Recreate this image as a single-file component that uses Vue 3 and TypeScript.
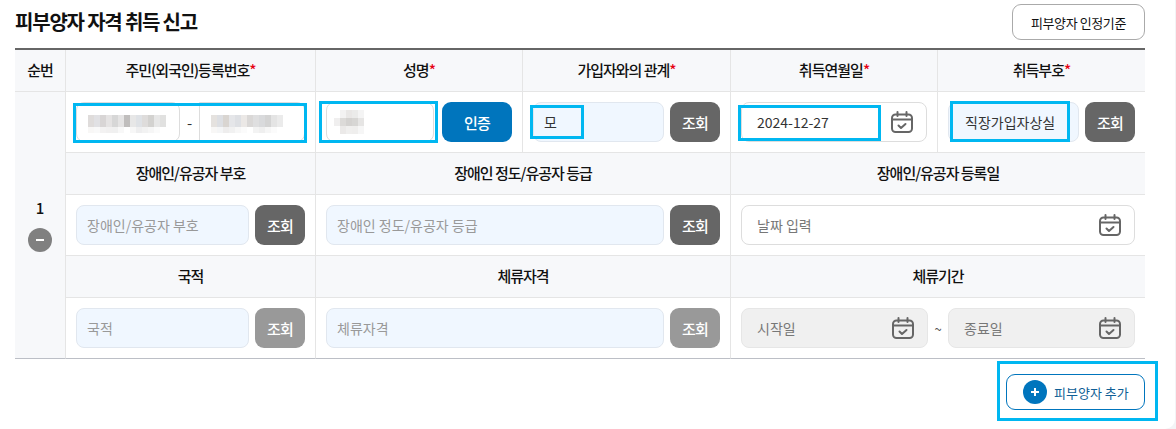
<script setup lang="ts">
interface Box { x: number; y: number; w: number; h: number }

const highlights: Box[] = [
  { x: 73, y: 103, w: 234, h: 40 },
  { x: 319, y: 101, w: 119, h: 42 },
  { x: 530, y: 105, w: 54, h: 34 },
  { x: 738, y: 105, w: 143, h: 36 },
  { x: 950, y: 101, w: 120, h: 41 },
  { x: 997, y: 361, w: 161, h: 60 }
]

const idFront: string[][] = [
  ['#dfdcdb', '#e1e1e4', '#d8d5d5', '#e5e3e3', '#d7d7d7', '#e5e4e4', '#c0bebd', '#e7e7e7', '#dfe2e6', '#dedcdb', '#d3d2d0', '#e7e7e7', '#e1e1e0'],
  ['#f8f7f6', '#f9f9f9', '#f3f2f2', '#f1f0f0', '#f0f0f0', '#f8f8f8', '#ffffff', '#f7f7f7', '#eeeeef', '#f2f2f2', '#f6f6f6', '#fbfbfb', '#ffffff']
]
const idBack: string[][] = [
  ['#e5e2df', '#dddfe3', '#d9d5d1', '#e5e6e9', '#dee0e4', '#ebe8e6', '#dad8d7', '#dfdfe0', '#d9dadc', '#d4d4d4', '#e4e4e4', '#ebebeb', '#ffffff'],
  ['#f8f7f6', '#f4f5f6', '#eeeded', '#f1f1f1', '#f7f7f7', '#fbfbfb', '#ffffff', '#f3f3f3', '#efefef', '#f6f6f6', '#fbfbfb', '#ffffff', '#ffffff']
]
const nameBlur: string[][] = [
  ['#ffffff', '#f3f2f2', '#e9e7e6', '#ebebea', '#f4f4f4', '#ffffff'],
  ['#f0efef', '#dcdad8', '#d4d2d0', '#d7d6d4', '#e6e5e4', '#ffffff'],
  ['#ffffff', '#ebe9e8', '#f0efee', '#efeeed', '#f6f6f6', '#ffffff']
]
const cell = 6
</script>

<template>
  <div class="panel">
    <header class="head">
      <h2 class="title">피부양자 자격 취득 신고</h2>
      <button class="outline-btn" type="button">피부양자 인정기준</button>
    </header>

    <table class="grid">
      <colgroup>
        <col class="c1" /><col class="c2" /><col class="c3" /><col class="c4" /><col class="c5" /><col class="c6" />
      </colgroup>
      <tbody>
        <tr class="th-row">
          <th>순번</th>
          <th>주민(외국인)등록번호<em>*</em></th>
          <th>성명<em>*</em></th>
          <th>가입자와의 관계<em>*</em></th>
          <th>취득연월일<em>*</em></th>
          <th class="last">취득부호<em>*</em></th>
        </tr>
        <tr class="td-row">
          <td class="seq" rowspan="5">
            <div class="seq-no">1</div>
            <button class="minus" type="button" aria-label="삭제"><span></span></button>
          </td>
          <td>
            <div class="line id-line">
              <div class="field plain mosaic-field">
                <svg :width="13 * cell" :height="idFront.length * cell + cell" class="mosaic">
                  <template v-for="(row, r) in idFront" :key="r">
                    <rect v-for="(c, i) in row" :key="i" :x="i * cell" :y="r * 12" :width="cell" :height="r === 0 ? 12 : 6" :fill="c" />
                  </template>
                </svg>
              </div>
              <span class="dash">-</span>
              <div class="field plain mosaic-field back">
                <svg :width="13 * cell" :height="idBack.length * cell + cell" class="mosaic">
                  <template v-for="(row, r) in idBack" :key="r">
                    <rect v-for="(c, i) in row" :key="i" :x="i * cell" :y="r * 12" :width="cell" :height="r === 0 ? 12 : 6" :fill="c" />
                  </template>
                </svg>
              </div>
            </div>
          </td>
          <td>
            <div class="line">
              <div class="field plain mosaic-field name">
                <svg :width="6 * cell" :height="3 * 8" class="mosaic">
                  <template v-for="(row, r) in nameBlur" :key="r">
                    <rect v-for="(c, i) in row" :key="i" :x="i * cell" :y="r * 8" :width="cell" :height="8" :fill="c" />
                  </template>
                </svg>
              </div>
              <button class="btn blue" type="button">인증</button>
            </div>
          </td>
          <td>
            <div class="line">
              <input class="field code" value="모" readonly />
              <button class="btn dark" type="button">조회</button>
            </div>
          </td>
          <td>
            <div class="date-field white">
              <input class="date-input strong" value="2024-12-27" readonly />
              <svg class="cal" width="22" height="22" viewBox="0 0 22 22" fill="none" stroke="#666" stroke-width="2" stroke-linecap="round" stroke-linejoin="round">
                <rect x="1" y="3.5" width="20" height="17.5" rx="3.5" /><path d="M1.5 8.5h19M6.5 1v4M15.5 1v4" /><path d="M7.5 14.5l2.5 2.5 4.5-4" />
              </svg>
            </div>
          </td>
          <td class="last">
            <div class="line tight">
              <input class="field code wide-pad" value="직장가입자상실" readonly />
              <button class="btn dark" type="button">조회</button>
            </div>
          </td>
        </tr>
        <tr class="th-row">
          <th>장애인/유공자 부호</th>
          <th colspan="2">장애인 정도/유공자 등급</th>
          <th colspan="2" class="last">장애인/유공자 등록일</th>
        </tr>
        <tr class="td-row">
          <td>
            <div class="line">
              <input class="field code" placeholder="장애인/유공자 부호" readonly />
              <button class="btn dark" type="button">조회</button>
            </div>
          </td>
          <td colspan="2">
            <div class="line">
              <input class="field code" placeholder="장애인 정도/유공자 등급" readonly />
              <button class="btn dark" type="button">조회</button>
            </div>
          </td>
          <td colspan="2" class="last">
            <div class="date-field white">
              <input class="date-input" placeholder="날짜 입력" readonly />
              <svg class="cal" width="22" height="22" viewBox="0 0 22 22" fill="none" stroke="#666" stroke-width="2" stroke-linecap="round" stroke-linejoin="round">
                <rect x="1" y="3.5" width="20" height="17.5" rx="3.5" /><path d="M1.5 8.5h19M6.5 1v4M15.5 1v4" /><path d="M7.5 14.5l2.5 2.5 4.5-4" />
              </svg>
            </div>
          </td>
        </tr>
        <tr class="th-row">
          <th>국적</th>
          <th colspan="2">체류자격</th>
          <th colspan="2" class="last">체류기간</th>
        </tr>
        <tr class="td-row end">
          <td>
            <div class="line">
              <input class="field code" placeholder="국적" readonly />
              <button class="btn muted" type="button">조회</button>
            </div>
          </td>
          <td colspan="2">
            <div class="line">
              <input class="field code" placeholder="체류자격" readonly />
              <button class="btn muted" type="button">조회</button>
            </div>
          </td>
          <td colspan="2" class="last">
            <div class="range">
              <div class="date-field off">
                <input class="date-input" placeholder="시작일" readonly />
                <svg class="cal" width="22" height="22" viewBox="0 0 22 22" fill="none" stroke="#666" stroke-width="2" stroke-linecap="round" stroke-linejoin="round">
                  <rect x="1" y="3.5" width="20" height="17.5" rx="3.5" /><path d="M1.5 8.5h19M6.5 1v4M15.5 1v4" /><path d="M7.5 14.5l2.5 2.5 4.5-4" />
                </svg>
              </div>
              <span class="tilde">~</span>
              <div class="date-field off">
                <input class="date-input" placeholder="종료일" readonly />
                <svg class="cal" width="22" height="22" viewBox="0 0 22 22" fill="none" stroke="#666" stroke-width="2" stroke-linecap="round" stroke-linejoin="round">
                  <rect x="1" y="3.5" width="20" height="17.5" rx="3.5" /><path d="M1.5 8.5h19M6.5 1v4M15.5 1v4" /><path d="M7.5 14.5l2.5 2.5 4.5-4" />
                </svg>
              </div>
            </div>
          </td>
        </tr>
      </tbody>
    </table>

    <footer class="foot">
      <button class="add-btn" type="button">
        <span class="plus"><i></i></span>
        피부양자 추가
      </button>
    </footer>

    <div
      v-for="(b, i) in highlights"
      :key="i"
      class="mark"
      :style="{ left: b.x + 'px', top: b.y + 'px', width: b.w + 'px', height: b.h + 'px' }"
    ></div>
  </div>
</template>

<style>
html, body { margin: 0; background: #f3f4f6; }
</style>

<style scoped>
* { box-sizing: border-box; }
.panel {
  position: relative;
  width: 1175px;
  height: 429px;
  padding: 4px 30px 0 15px;
  background: #fff;
  border-bottom-right-radius: 10px;
  overflow: hidden;
  font-family: "Noto Sans CJK KR", "Noto Sans", sans-serif;
  color: #111;
}
.head {
  display: flex;
  justify-content: space-between;
  align-items: flex-start;
  height: 44px;
}
.title {
  margin: 5px 0 0;
  font-size: 20px;
  line-height: 26px;
  font-weight: 700;
  letter-spacing: -1.2px;
}
.outline-btn {
  width: 133px;
  height: 36px;
  margin: 0;
  padding: 0;
  border: 1px solid #aaa;
  border-radius: 9px;
  background: #fff;
  color: #111;
  font: 400 13px/1 "Noto Sans CJK KR", sans-serif;
  letter-spacing: -0.4px;
}
.grid {
  width: 1130px;
  table-layout: fixed;
  border-collapse: separate;
  border-spacing: 0;
  border-top: 2px solid #666;
}
.c1 { width: 51px; }
.c2 { width: 250px; }
.c3 { width: 207px; }
.c4 { width: 208px; }
.c5 { width: 207px; }
.c6 { width: 207px; }
th, td {
  padding: 0;
  border-right: 1px solid #e5e5e5;
  border-bottom: 1px solid #e5e5e5;
}
th.last, td.last { border-right: 0; }
.th-row th {
  height: 42px;
  background: #f7f8fa;
  font-size: 15px;
  font-weight: 500;
  letter-spacing: -1px;
  padding-bottom: 2px;
}
.th-row th em {
  color: #e60012;
  font-style: normal;
}
.td-row td {
  height: 61px;
  padding: 0 10px;
}
.td-row.end td { border-bottom-color: #bcbfc6; }
td.seq {
  padding: 0;
  background: #f7f8fa;
  text-align: center;
  border-bottom-color: #bcbfc6;
}
.seq-no {
  font-size: 15px;
  font-weight: 500;
  line-height: 20px;
  margin-bottom: 10px;
}
.minus {
  display: flex;
  align-items: center;
  justify-content: center;
  width: 24px;
  height: 24px;
  margin: 0 auto;
  padding: 0;
  border: 0;
  border-radius: 50%;
  background: #808080;
}
.minus span {
  width: 8px;
  height: 2px;
  background: #fff;
}
.line {
  display: flex;
  align-items: center;
  gap: 6px;
}
.id-line { gap: 0; }
.field {
  flex: 1;
  min-width: 0;
  height: 40px;
  border-radius: 8px;
  font: 400 14px/38px "Noto Sans CJK KR", sans-serif;
  color: #333;
  outline: 0;
  padding: 0 10px;
}
.code {
  background: #f0f7ff;
  border: 1px solid #e1e7ef;
}
.code::placeholder {
  color: #999;
  opacity: 1;
}
.date-input::placeholder {
  color: #777;
  opacity: 1;
}
.wide-pad { padding: 0 0 0 16px; }
.plain {
  background: #fff;
  border: 1px solid #ddd;
}
.mosaic-field {
  display: flex;
  align-items: center;
  flex: none;
  width: 104px;
  padding: 3px 0 0 11px;
}
.mosaic-field.back {
  width: 106px;
  border-radius: 0 8px 8px 0;
}
.mosaic-field.name {
  flex: 1;
  padding: 0 0 0 7px;
}
.mosaic { display: block; filter: blur(0.6px); }
.dash {
  flex: 1;
  text-align: center;
  font-size: 15px;
  color: #333;
}
.btn {
  flex: none;
  width: 50px;
  height: 40px;
  margin: 0;
  padding: 0;
  border: 0;
  border-radius: 9px;
  color: #fff;
  font: 500 15px/1 "Noto Sans CJK KR", sans-serif;
  letter-spacing: -0.8px;
}
.btn.blue { width: 70px; background: #0075bd; margin-left: 2px; }
.btn.dark { background: #666; }
.btn.muted { background: #999; }
.date-field {
  display: flex;
  align-items: center;
  height: 40px;
  padding: 0 13px 0 15px;
  border: 1px solid #ddd;
  border-radius: 8px;
}
.date-field.white { background: #fff; }
.date-field.off {
  flex: 1;
  background: #f0f0f0;
  border-color: #e6e6e6;
}
.date-input {
  flex: 1;
  min-width: 0;
  width: 100%;
  height: 36px;
  padding: 0;
  border: 0;
  outline: 0;
  background: transparent;
  font: 400 14px/36px "Noto Sans CJK KR", sans-serif;
  color: #333;
}
.cal { flex: none; display: block; }
.range {
  display: flex;
  align-items: center;
}
.tilde {
  flex: none;
  width: 20px;
  text-align: center;
  font-size: 13px;
  color: #555;
}
.foot {
  display: flex;
  justify-content: flex-end;
  padding-top: 15px;
}
.add-btn {
  display: flex;
  align-items: center;
  width: 139px;
  height: 36px;
  margin: 0;
  padding: 0 0 0 16px;
  gap: 7px;
  border: 1px solid #0075bd;
  border-radius: 9px;
  background: #fff;
  color: #0f5f96;
  font: 400 13px/1 "Noto Sans CJK KR", sans-serif;
}
.plus {
  position: relative;
  flex: none;
  width: 24px;
  height: 24px;
  border-radius: 50%;
  background: #0075bd;
}
.plus::before, .plus i {
  content: "";
  position: absolute;
  background: #fff;
}
.plus::before { left: 8px; top: 11px; width: 8px; height: 2px; }
.plus i { left: 11px; top: 8px; width: 2px; height: 8px; }
.mark {
  position: absolute;
  border: 3px solid #00b7f1;
  pointer-events: none;
}
</style>
